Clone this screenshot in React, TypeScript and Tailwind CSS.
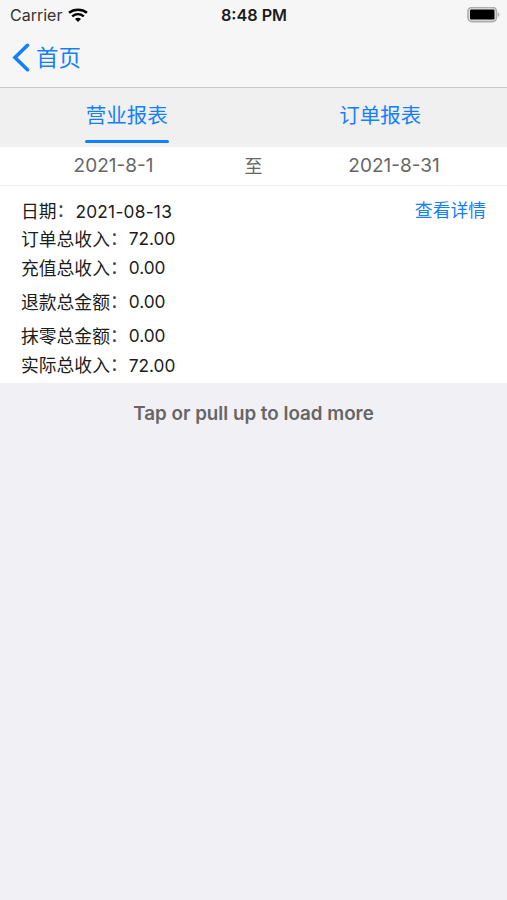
import React from "react";

const rows = [
  { label: "订单总收入", value: "72.00", cls: "h-[29px]" },
  { label: "充值总收入", value: "0.00", cls: "h-[29px]" },
  { label: "退款总金额", value: "0.00", cls: "h-[39px]" },
  { label: "抹零总金额", value: "0.00", cls: "h-[29px]" },
  { label: "实际总收入", value: "72.00", cls: "h-[30px]" },
];

function Label({ text }: { text: string }) {
  return (
    <span className="text-[17.8px] leading-6">
      {text}
      <span className="align-[1px] leading-none text-[#444]">：</span>
    </span>
  );
}

export default function App() {
  return (
    <div className="flex h-[900px] w-[507px] flex-col overflow-hidden bg-[#f0f0f5] font-['Inter','Noto_Sans_CJK_SC',sans-serif] text-[#1c1c1c]">
      <header className="h-[88px] shrink-0 border-b border-[#c8c8c8] bg-[#f7f6f7]">
        <div className="grid h-[30px] grid-cols-3 items-center">
          <div className="flex items-center gap-[6px] pl-[10px]">
            <span className="text-[16px] leading-[30px] text-[#333]">Carrier</span>
            <svg width="20" height="14" viewBox="0 0 20 14" fill="none" stroke="#000" strokeWidth="2.5">
              <path d="M1 4.8C6 .6 14 .6 19 4.8" />
              <path d="M4.2 8.4c3.5-2.9 8.1-2.9 11.6 0" />
              <path d="M7 10.9c1.8-1.4 4.2-1.4 6 0L10 13.9z" fill="#000" stroke="none" />
            </svg>
          </div>
          <span className="pl-px text-center text-[16.2px] font-semibold">8:48 PM</span>
          <div className="flex justify-end pr-[7px]">
            <svg width="33" height="16" viewBox="0 0 33 16">
              <rect x="1" y=".4" width="28.5" height="14.2" rx="4" fill="#e2e2e2" stroke="#adadad" strokeWidth="1.6" />
              <rect x="3" y="2.5" width="24.5" height="10" rx="1.2" fill="#000" />
              <path d="M31 5.2c1.8.8 1.8 3.8 0 4.6z" fill="#aaa" />
            </svg>
          </div>
        </div>
        <div className="flex h-[55px] items-center pl-[12px] text-[#157efb]">
          <svg width="18" height="29" viewBox="0 0 18 29" fill="none" stroke="currentColor" strokeWidth="3.6" strokeLinecap="round">
            <path d="M15.5 2.3 3 14.5l12.5 12.2" />
          </svg>
          <span className="ml-[6px] pt-px text-[22.5px]">首页</span>
        </div>
      </header>
      <nav className="grid h-[59px] shrink-0 grid-cols-2 bg-[#f0f0f0] text-[20.5px] text-[#157efb]">
        <div className="flex flex-col items-center">
          <span className="h-[52px] leading-[55px]">营业报表</span>
          <span className="ml-px h-[3px] w-[84px] rounded-sm bg-[#157efb]" />
        </div>
        <div className="text-center leading-[55px]">订单报表</div>
      </nav>
      <div className="flex h-[39px] shrink-0 items-center border-b border-[#f1f1f1] bg-white text-[19px] text-[#666]">
        <span className="w-[227px] pt-px text-center">2021-8-1</span>
        <span className="w-[53px] text-center text-[18px]">至</span>
        <span className="w-[227px] pl-px pt-px text-center">2021-8-31</span>
      </div>
      <main className="h-[197px] shrink-0 bg-white px-[21px] pt-[11px] text-[17.3px]">
        <div className="flex h-[28px] items-center justify-between">
          <span className="flex items-center pt-[2px]"><Label text="日期" /><span className="pl-px tracking-[0.25px]">2021-08-13</span></span>
          <span className="pt-px text-[17.8px] text-[#157efb]">查看详情</span>
        </div>
        {rows.map((r) => (
          <div key={r.label} className={"flex items-center " + r.cls}>
            <Label text={r.label} /><span className="pb-px pl-px">{r.value}</span>
          </div>
        ))}
      </main>
      <p className="h-[60px] text-center text-[18.8px] font-semibold leading-[61px] text-[#666]">Tap or pull up to load more</p>
    </div>
  );
}
